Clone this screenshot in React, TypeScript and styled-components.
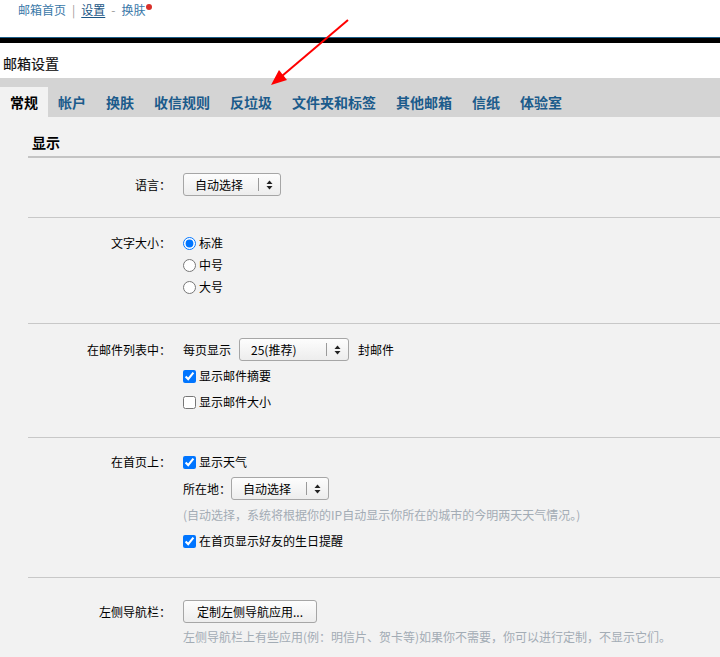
import React from "react";
import styled, { createGlobalStyle } from "styled-components";

const GlobalStyle = createGlobalStyle`
  html, body {
    margin: 0;
    padding: 0;
    background: #f2f2f2;
  }
  body {
    font-family: "Noto Sans CJK SC", "Liberation Sans", sans-serif;
    font-size: 12px;
    color: #000;
  }
`;

const Page = styled.div`
  position: relative;
  width: 720px;
  min-height: 657px;
  overflow: hidden;
  background: #f2f2f2;
`;

const Top = styled.div`
  background: #fff;
  height: 37px;
  padding: 3px 0 0 18px;
  box-sizing: border-box;
  line-height: 14px;
  font-size: 12px;
`;

const Crumb = styled.a<{ $dark?: boolean; $underline?: boolean }>`
  color: ${(p) => (p.$dark ? "#1a5585" : "#3a78a8")};
  text-decoration: ${(p) => (p.$underline ? "underline" : "none")};
  text-underline-offset: 2px;
`;

const Sep = styled.span`
  color: #9a9a9a;
  margin: 0 6px;
`;

const Dot = styled.span`
  display: inline-block;
  width: 6px;
  height: 6px;
  border-radius: 50%;
  background: #d8302a;
  vertical-align: top;
  margin: 1px 0 0 1px;
`;

const Rule = styled.div`
  border-top: 1px solid #1d5f8a;
  height: 5px;
  background: #000;
`;

const Title = styled.div`
  background: #fff;
  padding: 12px 0 7px 3px;
  line-height: 16px;
  font-size: 14px;
  color: #111;
  -webkit-text-stroke: 0.2px #111;
`;

const TabBar = styled.div`
  display: flex;
  background: #d4d4d4;
  padding-top: 9px;
`;

const Tab = styled.div<{ $active?: boolean }>`
  padding: 0 10px;
  height: 30px;
  line-height: 30px;
  font-size: 14px;
  font-weight: bold;
  color: ${(p) => (p.$active ? "#000" : "#1b5b8b")};
  background: ${(p) => (p.$active ? "#f2f2f2" : "transparent")};
`;

const Content = styled.div`
  padding-left: 28px;
`;

const SectionHead = styled.div`
  padding: 17px 0 6px 4px;
  line-height: 16px;
  font-size: 14px;
  font-weight: bold;
  border-bottom: 2px solid #c4c4c4;
`;

const Row = styled.div<{ $pt: number; $pb: number; $last?: boolean }>`
  display: flex;
  align-items: flex-start;
  padding: ${(p) => p.$pt}px 0 ${(p) => p.$pb}px;
  border-bottom: ${(p) => (p.$last ? "none" : "1px solid #c8c8c8")};
`;

const Label = styled.div<{ $h: number }>`
  width: 143px;
  flex: none;
  text-align: right;
  line-height: ${(p) => p.$h}px;
  margin-right: 12px;
`;

const Controls = styled.div<{ $gap: number }>`
  display: flex;
  flex-direction: column;
  gap: ${(p) => p.$gap}px;
`;

const Line = styled.div<{ $h?: number }>`
  display: flex;
  align-items: center;
  height: ${(p) => p.$h ?? 22}px;
  line-height: ${(p) => p.$h ?? 22}px;
  white-space: nowrap;
`;

const Spacer = styled.span<{ $w: number }>`
  width: ${(p) => p.$w}px;
  flex: none;
`;

const Select = styled.div<{ $w: number }>`
  display: flex;
  align-items: center;
  box-sizing: border-box;
  width: ${(p) => p.$w}px;
  height: 23px;
  border: 1px solid #a6a6a6;
  border-radius: 3px;
  background: linear-gradient(#fdfdfd, #ededed);
  padding-left: 11px;
  font-size: 12px;
  line-height: 20px;
`;

const SelectText = styled.span`
  flex: 1;
`;

const SelectArrow = styled.span`
  display: flex;
  align-items: center;
  justify-content: center;
  width: 21px;
  height: 13px;
  border-left: 1px solid #9a9a9a;
`;

const Check = styled.input`
  width: 13px;
  height: 13px;
  margin: 0 3px 0 0;
  accent-color: #0075ff;
`;

const Hint = styled.div`
  color: #a3acb5;
  line-height: 22px;
  white-space: nowrap;
`;

const Button = styled.div`
  box-sizing: border-box;
  width: 134px;
  height: 23px;
  border: 1px solid #a6a6a6;
  border-radius: 3px;
  background: linear-gradient(#fdfdfd, #ededed);
  text-align: center;
  line-height: 21px;
`;

const Arrow = styled.svg`
  position: absolute;
  left: 0;
  top: 0;
  pointer-events: none;
`;

const Updown = () => (
  <svg width="7" height="10" viewBox="0 0 7 10">
    <path d="M3.5 0.5 L6.5 4 L0.5 4 Z" fill="#222" />
    <path d="M3.5 9.5 L6.5 6 L0.5 6 Z" fill="#222" />
  </svg>
);

const Dropdown = ({ w, text }: { w: number; text: string }) => (
  <Select $w={w}>
    <SelectText>{text}</SelectText>
    <SelectArrow>
      <Updown />
    </SelectArrow>
  </Select>
);

const tabs = ["常规", "帐户", "换肤", "收信规则", "反垃圾", "文件夹和标签", "其他邮箱", "信纸", "体验室"];

export default function App() {
  return (
    <Page>
      <GlobalStyle />
      <Top>
        <Crumb>邮箱首页</Crumb>
        <Sep>|</Sep>
        <Crumb $dark $underline>设置</Crumb>
        <Sep>-</Sep>
        <Crumb>换肤</Crumb>
        <Dot />
      </Top>
      <Rule />
      <Title>邮箱设置</Title>
      <TabBar>
        {tabs.map((t, i) => (
          <Tab key={t} $active={i === 0}>
            {t}
          </Tab>
        ))}
      </TabBar>
      <Content>
        <SectionHead>显示</SectionHead>

        <Row $pt={15} $pb={21}>
          <Label $h={23}>语言：</Label>
          <Controls $gap={0}>
            <Dropdown w={98} text="自动选择" />
          </Controls>
        </Row>

        <Row $pt={14} $pb={25}>
          <Label $h={22}>文字大小：</Label>
          <Controls $gap={0}>
            <Line>
              <Check type="radio" name="size" defaultChecked />
              标准
            </Line>
            <Line>
              <Check type="radio" name="size" />
              中号
            </Line>
            <Line>
              <Check type="radio" name="size" />
              大号
            </Line>
          </Controls>
        </Row>

        <Row $pt={14} $pb={24}>
          <Label $h={23}>在邮件列表中：</Label>
          <Controls $gap={4}>
            <Line $h={23}>
              每页显示
              <Spacer $w={8} />
              <Dropdown w={110} text="25(推荐)" />
              <Spacer $w={9} />
              封邮件
            </Line>
            <Line>
              <Check type="checkbox" defaultChecked />
              显示邮件摘要
            </Line>
            <Line>
              <Check type="checkbox" />
              显示邮件大小
            </Line>
          </Controls>
        </Row>

        <Row $pt={13} $pb={25}>
          <Label $h={22}>在首页上：</Label>
          <Controls $gap={4}>
            <Line>
              <Check type="checkbox" defaultChecked />
              显示天气
            </Line>
            <Line $h={23}>
              所在地：
              <Dropdown w={98} text="自动选择" />
            </Line>
            <Hint>(自动选择，系统将根据你的IP自动显示你所在的城市的今明两天天气情况。)</Hint>
            <Line>
              <Check type="checkbox" defaultChecked />
              在首页显示好友的生日提醒
            </Line>
          </Controls>
        </Row>

        <Row $pt={22} $pb={10} $last>
          <Label $h={23}>左侧导航栏：</Label>
          <Controls $gap={3}>
            <Button>定制左侧导航应用...</Button>
            <Hint>左侧导航栏上有些应用(例：明信片、贺卡等)如果你不需要，你可以进行定制，不显示它们。</Hint>
          </Controls>
        </Row>
      </Content>

      <Arrow width="720" height="100" viewBox="0 0 720 100">
        <line x1="348" y1="20" x2="282" y2="76" stroke="#ff0000" strokeWidth="2" />
        <polygon points="271,85 279,70 287,80" fill="#ff0000" />
      </Arrow>
    </Page>
  );
}
